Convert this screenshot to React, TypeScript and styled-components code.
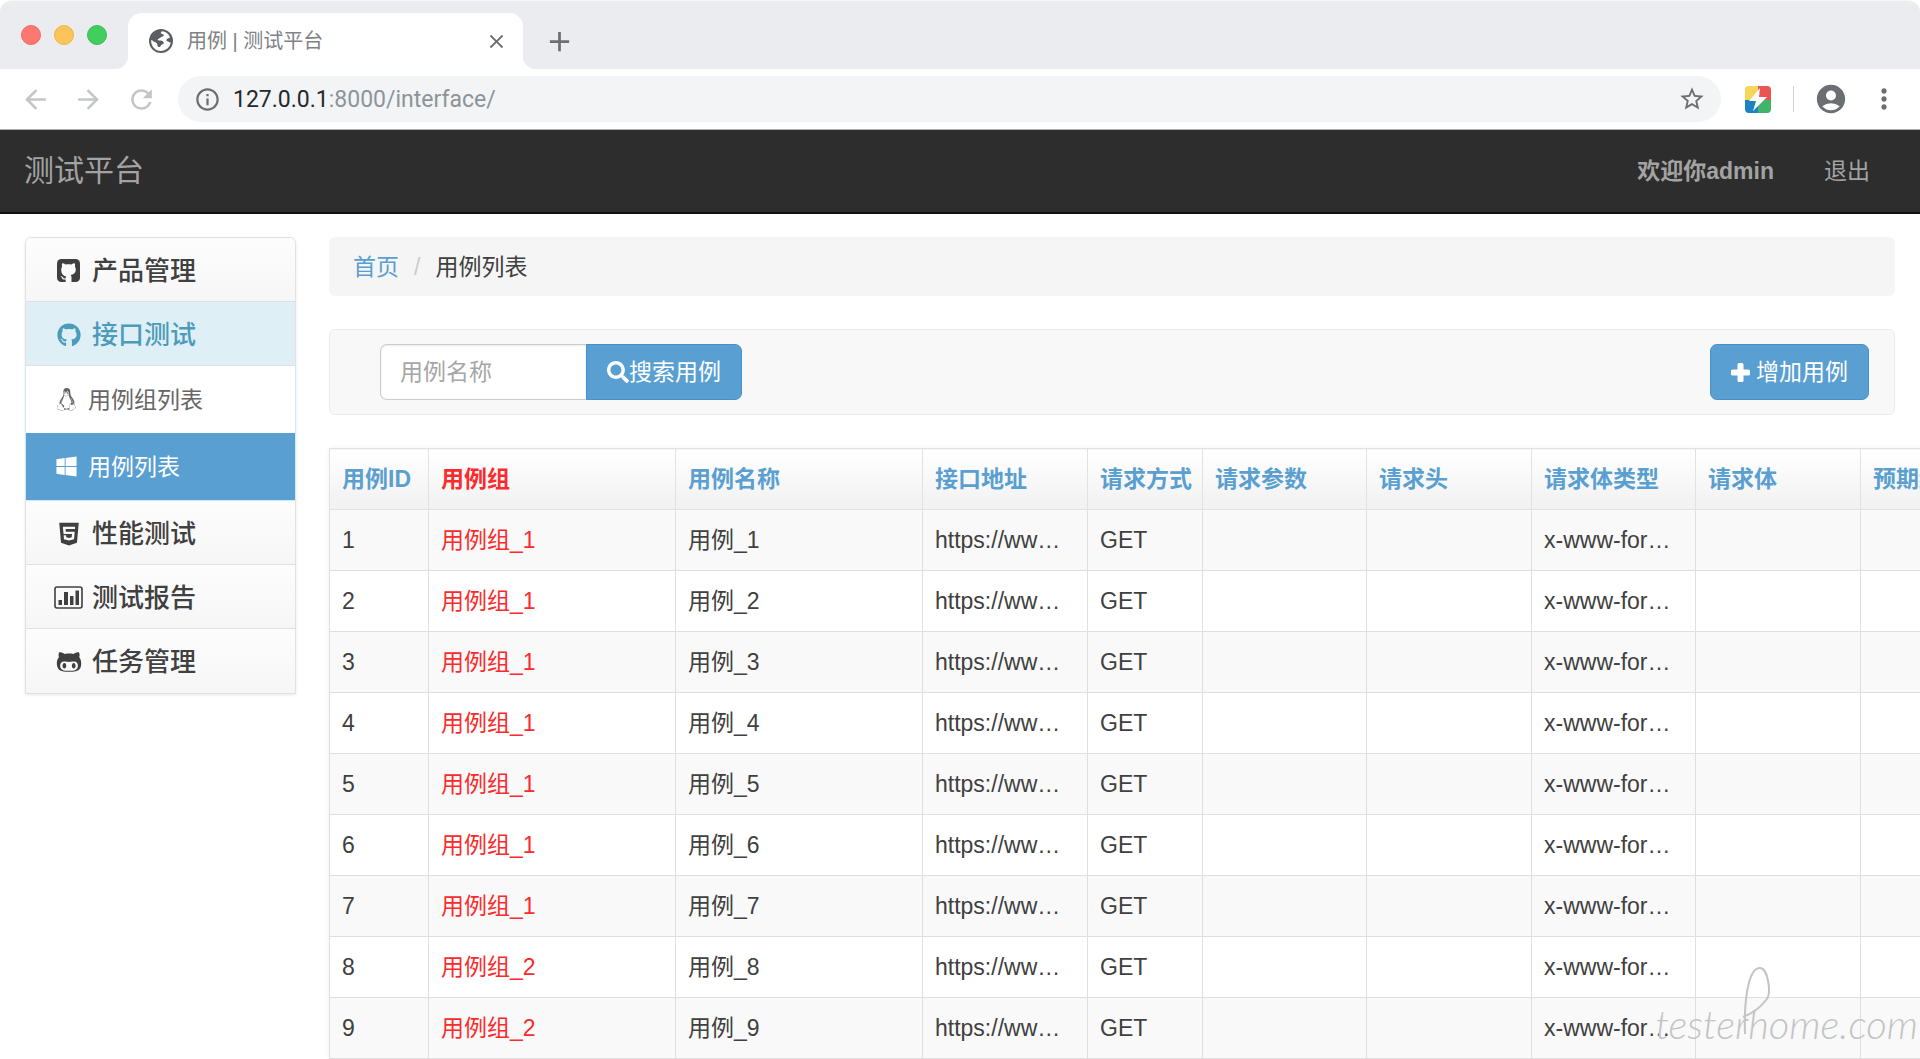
import React from "react";
import styled, { createGlobalStyle, css } from "styled-components";
import {
  FaGithub, FaLinux, FaWindows, FaHtml5, FaGithubAlt, FaSearch,
} from "react-icons/fa";
import {
  MdArrowBack, MdArrowForward, MdRefresh, MdInfoOutline, MdStarBorder,
  MdAccountCircle, MdMoreVert, MdClose, MdAdd,
} from "react-icons/md";

const sans = `"Liberation Sans", Arial, "Noto Sans CJK SC", sans-serif`;

const GlobalStyle = createGlobalStyle`
  *, *::before, *::after { box-sizing: border-box; }
  body { margin: 0; background: #fff; color: #404040; font: 23px/32px ${sans}; }
  button, input { font: inherit; }
  button { cursor: pointer; }
  a { text-decoration: none; color: inherit; }
`;

const Window = styled.div`
  position: relative;
  display: flex;
  flex-direction: column;
  height: 100vh;
  overflow: hidden;
`;

/* Browser chrome */
const TabStrip = styled.div`
  flex: none;
  display: flex;
  align-items: flex-end;
  height: 69px;
  background: #eaecf0;
  border-top: 1px solid #f6f7f8;
  border-radius: 12px 12px 0 0;
`;

const Lights = styled.div`
  display: flex;
  gap: 13px;
  align-self: flex-start;
  padding: 24px 21px 0 21px;
`;

const Light = styled.button<{ $color: string; $edge: string }>`
  width: 20px;
  height: 20px;
  padding: 0;
  border: 1px solid ${(p) => p.$edge};
  border-radius: 50%;
  background: ${(p) => p.$color};
`;

const Tab = styled.div`
  position: relative;
  display: flex;
  align-items: center;
  width: 395px;
  height: 56px;
  padding: 0 15px 0 21px;
  border-radius: 14px 14px 0 0;
  background: #fff;
  color: #808285;
  font-size: 20px;
  &::before, &::after {
    content: "";
    position: absolute;
    bottom: 0;
    width: 14px;
    height: 14px;
  }
  &::before { left: -14px; background: radial-gradient(circle at 0 0, #eaecf0 14px, #fff 15px); }
  &::after { right: -14px; background: radial-gradient(circle at 100% 0, #eaecf0 14px, #fff 15px); }
`;

const TabTitle = styled.span`
  flex: 1;
  margin-left: 14px;
`;

const IconButton = styled.button<{ $color?: string }>`
  display: flex;
  align-items: center;
  justify-content: center;
  padding: 0;
  border: 0;
  background: none;
  color: ${(p) => p.$color ?? "#6b6f74"};
`;

const NewTab = styled(IconButton)`
  height: 56px;
  margin-left: 20px;
`;

const Toolbar = styled.div`
  flex: none;
  display: flex;
  align-items: center;
  height: 61px;
  padding: 0 20px;
  border-bottom: 1px solid #b0b0b0;
  background: #fff;
`;

const NavButtons = styled.div`
  display: flex;
  gap: 22px;
  margin-right: 21px;
`;

const AddressBar = styled.div`
  flex: 1;
  display: flex;
  align-items: center;
  height: 46px;
  padding: 0 15px 0 16px;
  border-radius: 23px;
  background: #f2f4f5;
`;

const Url = styled.a`
  flex: 1;
  margin-left: 12px;
  padding-top: 2px;
  color: #8d9499;
  font: 23px/32px Roboto, sans-serif;
`;

const UrlHost = styled.span`
  color: #26292d;
`;

const Extensions = styled.div`
  display: flex;
  align-items: center;
  margin-left: 24px;
`;

const Separator = styled.span`
  width: 1px;
  height: 26px;
  margin: 0 20px 0 22px;
  background: #cfd0d2;
`;

const MenuButton = styled(IconButton)`
  margin-left: 20px;
`;

/* Site header */
const Navbar = styled.header`
  flex: none;
  display: flex;
  align-items: center;
  justify-content: space-between;
  height: 84px;
  padding: 0 50px 0 24px;
  border-bottom: 2px solid #101010;
  background: #2d2d2d;
  color: #a3a3a3;
`;

const Brand = styled.a`
  font-size: 30px;
`;

const UserNav = styled.nav`
  display: flex;
  gap: 50px;
`;

/* Body */
const Body = styled.div`
  display: flex;
  align-items: flex-start;
  gap: 33px;
  padding: 23px 25px 0;
`;

const Sidebar = styled.nav`
  flex: none;
  width: 271px;
  border: 1px solid #e2e2e2;
  border-radius: 6px 6px 0 0;
  box-shadow: 0 1px 3px rgba(0, 0, 0, 0.1);
`;

const Group = styled.a<{ $active?: boolean }>`
  display: flex;
  align-items: center;
  gap: 9px;
  height: 64px;
  padding: 2px 0 0 28px;
  border-bottom: 1px solid #e0e0e0;
  background: linear-gradient(#fdfdfd, #f6f6f6);
  color: #404040;
  font-size: 26px;
  font-weight: 500;
  &:first-child { border-radius: 6px 6px 0 0; }
  &:last-child { border-bottom: 0; }
  ${(p) => p.$active && css`
    background: #dfeff6;
    color: #4c9bba;
  `}
`;

const GroupIcon = styled.span`
  display: flex;
  justify-content: center;
  width: 29px;
`;

const SubMenu = styled.div`
  margin: 0 -1px;
  border: solid #c9edf2;
  border-width: 0 1px 1px;
`;

const SubItem = styled.a<{ $active?: boolean }>`
  display: flex;
  align-items: center;
  gap: 10px;
  height: 67px;
  padding-left: 29px;
  background: ${(p) => (p.$active ? "#599fd1" : "#fff")};
  color: ${(p) => (p.$active ? "#fff" : "#666")};
`;

const Main = styled.main`
  flex: 1;
  min-width: 0;
`;

const Breadcrumb = styled.nav`
  display: flex;
  align-items: center;
  gap: 15px;
  height: 59px;
  margin-bottom: 33px;
  padding: 0 24px;
  border-radius: 6px;
  background: #f5f5f5;
`;

const Crumb = styled.a`
  color: #5a9fd1;
`;

const Slash = styled.span`
  color: #ccc;
`;

const Well = styled.form`
  display: flex;
  align-items: center;
  justify-content: space-between;
  height: 86px;
  margin-bottom: 33px;
  padding: 0 25px 0 50px;
  border: 1px solid #ebebeb;
  border-radius: 6px;
  background: #f8f8f8;
`;

const SearchGroup = styled.div`
  display: flex;
`;

const SearchInput = styled.input`
  width: 206px;
  height: 56px;
  padding: 0 19px;
  border: 1px solid #ccc;
  border-right: 0;
  border-radius: 7px 0 0 7px;
  background: #fff;
  box-shadow: inset 0 1px 2px rgba(0, 0, 0, 0.08);
  color: #404040;
  &::placeholder { color: #a6a6a6; opacity: 1; }
`;

const PrimaryButton = styled.button<{ $attached?: boolean }>`
  display: flex;
  align-items: center;
  justify-content: center;
  gap: ${(p) => (p.$attached ? "0" : "6px")};
  height: 56px;
  padding: 0 20px;
  border: 1px solid #4891c8;
  border-radius: ${(p) => (p.$attached ? "0 7px 7px 0" : "7px")};
  background: #599fd1;
  color: #fff;
`;

const Table = styled.table`
  width: 1696px;
  table-layout: fixed;
  border-collapse: collapse;
  box-shadow: 0 0 5px rgba(0, 0, 0, 0.06);
`;

const cell = css`
  height: 61px;
  padding: 0 12px;
  border: 1px solid #dfdfdf;
  overflow: hidden;
  text-align: left;
  white-space: nowrap;
`;

const HeadCell = styled.th<{ $red?: boolean }>`
  ${cell}
  padding-right: 0;
  border-color: #e2e2e2;
  background: linear-gradient(#fff, #f1f1f1);
  color: ${(p) => (p.$red ? "#fb2a2d" : "#5a9fd1")};
  font-weight: 700;
`;

const Cell = styled.td<{ $red?: boolean }>`
  ${cell}
  color: ${(p) => (p.$red ? "#fb2a2d" : "#404040")};
`;

const Row = styled.tr`
  background: #fff;
  &:nth-child(odd) { background: #f9f9f9; }
`;

const Watermark = styled.div`
  position: absolute;
  right: 2px;
  bottom: 13px;
  color: #c4c4c4;
  font: italic 300 40px/44px Lato, sans-serif;
`;

const Flourish = styled.svg`
  position: absolute;
  left: 86px;
  bottom: 10px;
`;

const GlobeIcon = () => (
  <svg width="24" height="24" viewBox="0 0 24 24" aria-hidden="true">
    <circle cx="12" cy="12" r="12" fill="#5b5f64" />
    <path d="M13 2.300c-2 1-1 2.700.8 3 1.800.400 1 2.200-.8 2.400-1.700.300-2 1.600-3.400 2-1.500.400-.9 1.800.6 1.700 1.800 0 3.700.2 4.400 1.800.6 1.500-.6 2-2 2.500-1 .4-.6 1.700-1.800 2.200-1 .5-2.300-.3-2.400-1.700 0-1.900-.7-2.300-2.200-2.900-1.700-.6-2-1.700-4-2.300A10 10 0 0 0 12 22a10 10 0 0 0 9.800-8.500c-1.400.1-1.900-.9-3-1.100-1.400-.3-1.800-1.600-.8-2.500.8-.8 2-.5 3-1.700A10 10 0 0 0 13 2.300z" fill="#fff" />
  </svg>
);

const BoltIcon = () => (
  <svg width="26" height="27" viewBox="0 0 26 27" aria-hidden="true">
    <clipPath id="bolt-frame"><rect width="26" height="27" rx="4" /></clipPath>
    <g clipPath="url(#bolt-frame)">
      <path d="M0 0h14v14H0z" fill="#f6d558" />
      <path d="M13 0h13v14H13z" fill="#ea5550" />
      <path d="M0 14h13v13H0z" fill="#1d82c4" />
      <path d="M13 14h13v13H13z" fill="#41b36b" />
      <path d="M15 2L4 15h7L8 25l14-14h-8z" fill="#fff" />
    </g>
  </svg>
);

const CatSquareIcon = () => (
  <svg width="23" height="23" viewBox="0 0 24 24" aria-hidden="true">
    <rect width="24" height="24" rx="4.500" fill="currentColor" />
    <path
      d="M5.500 4.600c1-.2 2.200.4 3.300 1.200 2.100-.5 4.300-.5 6.400 0 1.100-.8 2.300-1.400 3.300-1.200.5 1.200.5 2.300.1 3.200 1.900 2.500 1.400 8.200-4.300 8.900.5.600.8 1.500.8 2.500V24H9v-2.700c-2.300.5-3.400-.4-3.900-1.600-.3-.7-.8-1.200-1.400-1.500.9-.5 1.900 0 2.600 1 .7 1 1.500 1.300 2.700.9.100-.9.400-1.400.8-1.800C4 17.600 3.500 10.300 5.400 7.800 5 6.900 5 5.800 5.500 4.600z"
      fill="#fafafa"
    />
  </svg>
);

const PlusIcon = () => (
  <svg width="19" height="19" viewBox="0 0 19 19" fill="currentColor" aria-hidden="true">
    <rect y="6.500" width="19" height="6" rx="1.500" />
    <rect x="6.500" width="6" height="19" rx="1.500" />
  </svg>
);

const ChartIcon = () => (
  <svg width="29" height="24" viewBox="0 0 29 24" fill="currentColor" aria-hidden="true">
    <rect x="1" y="1" width="27" height="21" rx="2" fill="none" stroke="currentColor" strokeWidth="1.600" />
    <path d="M4.500 14h3.500v5H4.500zM10 6h4v13h-4zM16 10h3.500v9H16zM21.500 4.500H25V19h-3.500z" />
  </svg>
);

const columns = [
  { title: "用例ID", width: 99 },
  { title: "用例组", width: 247, red: true },
  { title: "用例名称", width: 247 },
  { title: "接口地址", width: 165 },
  { title: "请求方式", width: 115 },
  { title: "请求参数", width: 164 },
  { title: "请求头", width: 165 },
  { title: "请求体类型", width: 164 },
  { title: "请求体", width: 165 },
  { title: "预期结果", width: 165 },
];

const cases = Array.from({ length: 9 }, (_, i) => ({
  id: i + 1,
  group: `用例组_${i < 7 ? 1 : 2}`,
  name: `用例_${i + 1}`,
}));

export default function App() {
  return (
    <Window>
      <GlobalStyle />
      <TabStrip>
        <Lights>
          <Light aria-label="关闭窗口" $color="#fe7870" $edge="#ee6a62" />
          <Light aria-label="最小化" $color="#fdc556" $edge="#edb548" />
          <Light aria-label="最大化" $color="#41ce5e" $edge="#38bd52" />
        </Lights>
        <Tab>
          <GlobeIcon />
          <TabTitle>用例 | 测试平台</TabTitle>
          <IconButton aria-label="关闭标签页"><MdClose size={23} /></IconButton>
        </Tab>
        <NewTab aria-label="新标签页"><MdAdd size={33} /></NewTab>
      </TabStrip>
      <Toolbar>
        <NavButtons>
          <IconButton aria-label="后退" $color="#c4c5c7"><MdArrowBack size={31} /></IconButton>
          <IconButton aria-label="前进" $color="#c4c5c7"><MdArrowForward size={31} /></IconButton>
          <IconButton aria-label="刷新" $color="#c4c5c7"><MdRefresh size={31} /></IconButton>
        </NavButtons>
        <AddressBar>
          <IconButton aria-label="网站信息"><MdInfoOutline size={27} /></IconButton>
          <Url href="#"><UrlHost>127.0.0.1</UrlHost>:8000/interface/</Url>
          <IconButton aria-label="收藏"><MdStarBorder size={28} /></IconButton>
        </AddressBar>
        <Extensions>
          <IconButton aria-label="扩展程序"><BoltIcon /></IconButton>
          <Separator />
          <IconButton aria-label="用户"><MdAccountCircle size={34} /></IconButton>
          <MenuButton aria-label="菜单"><MdMoreVert size={32} /></MenuButton>
        </Extensions>
      </Toolbar>

      <Navbar>
        <Brand href="#">测试平台</Brand>
        <UserNav>
          <strong>欢迎你admin</strong>
          <a href="#">退出</a>
        </UserNav>
      </Navbar>

      <Body>
        <Sidebar>
          <Group href="#"><GroupIcon><CatSquareIcon /></GroupIcon>产品管理</Group>
          <Group href="#" $active><GroupIcon><FaGithub size={24} /></GroupIcon>接口测试</Group>
          <SubMenu>
            <SubItem href="#"><FaLinux size={23} />用例组列表</SubItem>
            <SubItem href="#" $active><FaWindows size={23} />用例列表</SubItem>
          </SubMenu>
          <Group href="#"><GroupIcon><FaHtml5 size={26} /></GroupIcon>性能测试</Group>
          <Group href="#"><GroupIcon><ChartIcon /></GroupIcon>测试报告</Group>
          <Group href="#"><GroupIcon><FaGithubAlt size={26} /></GroupIcon>任务管理</Group>
        </Sidebar>

        <Main>
          <Breadcrumb>
            <Crumb href="#">首页</Crumb>
            <Slash>/</Slash>
            <span>用例列表</span>
          </Breadcrumb>
          <Well onSubmit={(e) => e.preventDefault()}>
            <SearchGroup>
              <SearchInput aria-label="用例名称" placeholder="用例名称" />
              <PrimaryButton type="submit" $attached><FaSearch size={22} />搜索用例</PrimaryButton>
            </SearchGroup>
            <PrimaryButton type="button"><PlusIcon />增加用例</PrimaryButton>
          </Well>
          <Table>
            <colgroup>
              {columns.map((c) => <col key={c.title} style={{ width: c.width }} />)}
            </colgroup>
            <thead>
              <tr>
                {columns.map((c) => <HeadCell key={c.title} $red={c.red}>{c.title}</HeadCell>)}
              </tr>
            </thead>
            <tbody>
              {cases.map((c) => (
                <Row key={c.id}>
                  <Cell>{c.id}</Cell>
                  <Cell $red>{c.group}</Cell>
                  <Cell>{c.name}</Cell>
                  <Cell>https://ww…</Cell>
                  <Cell>GET</Cell>
                  <Cell />
                  <Cell />
                  <Cell>x-www-for…</Cell>
                  <Cell />
                  <Cell />
                </Row>
              ))}
            </tbody>
          </Table>
        </Main>
      </Body>
      <Watermark>
        testerhome.com
        <Flourish width="32" height="70" viewBox="0 0 32 70" fill="none" stroke="currentColor" strokeWidth="2" aria-hidden="true">
          <path d="M4 68C3 40 6 2 19 2c8 0 12 26 6 32C19 42 10 48 2 51" />
        </Flourish>
      </Watermark>
    </Window>
  );
}
